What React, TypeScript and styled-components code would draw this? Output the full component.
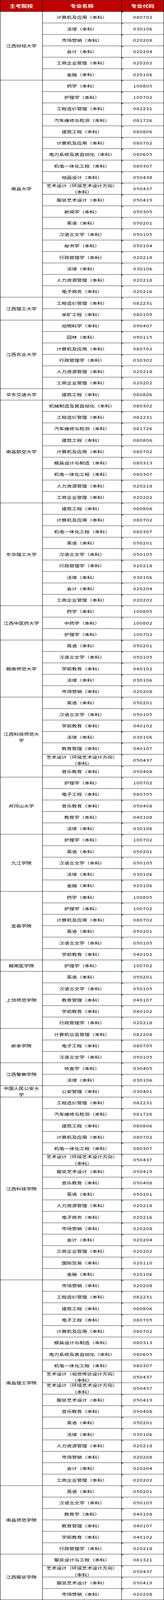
import React, { useState } from "react";
import styled, { createGlobalStyle } from "styled-components";

const GlobalStyle = createGlobalStyle`
  html, body {
    margin: 0;
    padding: 0;
    background: #ffffff;
  }
  body {
    font-family: "Noto Sans CJK SC", "Noto Sans", sans-serif;
    color: #000;
  }
  * { box-sizing: border-box; }
`;

type Item = [string, string, boolean?];
interface Group {
  school: string;
  items: Item[];
}

const data: Group[] = [
  { school: "江西财经大学", items: [["计算机及应用", "080702"], ["法律", "030106"], ["市场营销", "020208"], ["会计", "020204"], ["工商企业管理", "020202"], ["金融", "020106"]] },
  { school: "南昌大学", items: [["药学", "100805"], ["护理学", "100702"], ["工程造价管理", "082231"], ["汽车维修与检测", "081726"], ["建筑工程", "080806"], ["计算机及应用", "080702"], ["电力系统及其自动化", "080605"], ["机电一体化工程", "080307"], ["动画设计", "050438"], ["艺术设计（环境艺术设计方向）", "050437"], ["服装艺术设计", "050419"], ["新闻学", "050305"], ["英语", "050201"], ["汉语言文学", "050105"], ["秘书学", "050104"], ["行政管理学", "020218"], ["法律", "030106"], ["人力资源管理", "020218"], ["电子商务", "020216"]] },
  { school: "江西理工大学", items: [["工程造价管理", "082231"], ["采矿工程", "080109"]] },
  { school: "江西农业大学", items: [["动物科学", "090407"], ["园林", "090115"], ["计算机及应用", "080702"], ["行政管理学", "030302"], ["人力资源管理", "020218"], ["工商企业管理", "020202"]] },
  { school: "华东交通大学", items: [["建筑工程", "080806"]] },
  { school: "南昌航空大学", items: [["机械制造及其自动化", "080302"], ["工程造价管理", "082231"], ["汽车维修与检测", "081726"], ["建筑工程", "080806"], ["计算机及应用", "080702"], ["模具设计与制造", "080313"], ["机电一体化工程", "080307"], ["人力资源管理", "020218"], ["工商企业管理", "020202"]] },
  { school: "东华理工大学", items: [["建筑工程", "080806"], ["计算机及应用", "080702"], ["机电一体化工程", "080307"], ["英语", "050201"], ["汉语言文学", "050105"], ["行政管理学", "020218"], ["法律", "030106"], ["会计", "020204"], ["工商企业管理", "020202"]] },
  { school: "江西中医药大学", items: [["药学", "100805"], ["中药学", "100802"], ["护理学", "100702"]] },
  { school: "赣南师范大学", items: [["英语", "050201"], ["汉语言文学", "050105"], ["学前教育", "040102"], ["法律", "030106"], ["市场营销", "020208"]] },
  { school: "江西科技师范大学", items: [["英语", "050201"], ["汉语言文学", "050105"], ["学前教育", "040102"], ["法律", "030106"], ["教育管理", "040107"], ["艺术设计（环境艺术设计方向）", "050437"], ["音乐教育", "050408"]] },
  { school: "井冈山大学", items: [["护理学", "100702"], ["电子工程", "080705"], ["音乐教育", "050408"], ["教育学", "040108"], ["法律", "030106"]] },
  { school: "九江学院", items: [["护理学", "100702"], ["英语", "050201"], ["汉语言文学", "050105"], ["法律", "030106"], ["金融", "020106"]] },
  { school: "宜春学院", items: [["药学", "100805"], ["护理学", "100702"], ["计算机及应用", "080702"], ["英语", "050201"], ["汉语言文学", "050105"], ["学前教育", "040102"]] },
  { school: "赣南医学院", items: [["护理学", "100702"]] },
  { school: "上饶师范学院", items: [["英语", "050201"], ["汉语言文学", "050105"], ["教育管理", "040107"], ["学前教育", "040102"], ["行政管理学", "020218"]] },
  { school: "新余学院", items: [["计算机信息管理", "082208"], ["电子工程", "080705"], ["汉语言文学", "050105"]] },
  { school: "江西警察学院", items: [["侦查学", "030405"], ["法律", "030106"]] },
  { school: "中国人民公安大学", items: [["公安管理", "030401"]] },
  { school: "江西科技学院", items: [["工程造价管理", "082231"], ["汽车维修与检测", "081726"], ["建筑工程", "080806"], ["计算机及应用", "080702"], ["机电一体化工程", "080307"], ["艺术设计（环境艺术设计方向）", "050437"], ["服装艺术设计", "050419"], ["音乐教育", "050408"], ["英语", "050201"], ["人力资源管理", "020218"], ["电子商务", "020216"], ["市场营销", "020208"], ["会计", "020204"], ["工商企业管理", "020202"], ["国际贸易", "020110"], ["金融", "020106"]] },
  { school: "南昌理工学院", items: [["市场营销", "020208"], ["工程造价管理", "082231"], ["建筑工程", "080806"], ["电子工程", "080705"], ["计算机及应用", "080702"], ["模具设计与制造", "080313", false], ["电力系统及其自动化", "080605", false], ["机电一体化工程", "080307", false], ["艺术设计（视觉传达设计方向）", "050437", false], ["艺术设计（环境艺术设计方向）", "050437", false], ["服装艺术设计", "050419"], ["音乐教育", "050408"], ["英语", "050201"], ["法律", "030106"], ["人力资源管理", "020218"], ["市场营销", "020208"], ["会计", "020204"], ["工商企业管理", "020202"]] },
  { school: "南昌师范学院", items: [["英语", "050201"], ["汉语言文学", "050105"], ["教育学", "040108"], ["教育管理", "040107"], ["学前教育", "040102"], ["行政管理学", "020218"]] },
  { school: "江西服装学院", items: [["服装设计与工程", "081321"], ["艺术设计（环境艺术设计方向）", "050437"], ["服装艺术设计", "050419"], ["市场营销", "020208"]] },
];

const ROW = 40;
const totalRows = 1 + data.reduce((n, g) => n + g.items.length, 0);
const FULL_HEIGHT = totalRows * ROW + 1;

/* Clips the page to the visible window so nothing spills past it. */
const Frame = styled.div`
  width: 419px;
  overflow: hidden;
`;

/* Fits the full-height table into a shorter window when the browser caps its height. */
const Fitter = styled.div`
  width: 419px;
  transform-origin: 0 0;
`;

const Table = styled.div<{ $rows: number }>`
  display: grid;
  grid-template-columns: 108px 202px 108px;
  grid-template-rows: repeat(${(p) => p.$rows}, ${ROW}px);
  width: 419px;
  border-left: 1px solid #000;
  border-top: 1px solid #000;
`;

const Cell = styled.div<{ $row: number; $span?: number }>`
  grid-row: ${(p) => p.$row} / span ${(p) => p.$span ?? 1};
  display: flex;
  align-items: center;
  justify-content: center;
  text-align: center;
  border-right: 1px solid #000;
  border-bottom: 1px solid #000;
  padding: 0 4px;
  font-size: 13px;
  line-height: 22px;
  min-width: 0;
  min-height: 0;
`;

const HeaderCell = styled(Cell)<{ $col: number }>`
  grid-column: ${(p) => p.$col};
  background: #c00000;
  color: #ffffff;
  font-size: 15px;
  font-weight: 700;
`;

const SchoolCell = styled(Cell)`
  grid-column: 1;
`;

const MajorCell = styled(Cell)`
  grid-column: 2;
`;

const CodeCell = styled(Cell)<{ $flag: boolean }>`
  grid-column: 3;
  position: relative;
  letter-spacing: 1px;
  padding-left: 5px;

  &::before {
    content: "";
    display: ${(p) => (p.$flag ? "block" : "none")};
    position: absolute;
    top: 0;
    left: 0;
    width: 0;
    height: 0;
    border-top: 5px solid #1c8f1c;
    border-right: 5px solid transparent;
  }
`;

const Text = styled.span`
  display: block;
`;

export default function App() {
  const [scale] = useState(() =>
    typeof window === "undefined" ? 1 : Math.min(1, window.innerHeight / FULL_HEIGHT)
  );

  let row = 2;
  const cells: React.ReactNode[] = [];
  data.forEach((g, gi) => {
    const start = row;
    cells.push(
      <SchoolCell key={`s${gi}`} $row={start} $span={g.items.length}>
        <Text>{g.school}</Text>
      </SchoolCell>
    );
    g.items.forEach(([major, code, flag], i) => {
      const r = start + i;
      cells.push(
        <MajorCell key={`m${gi}-${i}`} $row={r}>
          <Text>{`${major}（本科）`}</Text>
        </MajorCell>,
        <CodeCell key={`c${gi}-${i}`} $row={r} $flag={flag !== false}>
          {code}
        </CodeCell>
      );
    });
    row += g.items.length;
  });

  return (
    <>
      <GlobalStyle />
      <Frame style={{ height: FULL_HEIGHT * scale }}>
        <Fitter style={{ transform: `scaleY(${scale})` }}>
          <Table role="table" $rows={totalRows}>
            <HeaderCell $row={1} $col={1}>主考院校</HeaderCell>
            <HeaderCell $row={1} $col={2}>专业名称</HeaderCell>
            <HeaderCell $row={1} $col={3}>专业代码</HeaderCell>
            {cells}
          </Table>
        </Fitter>
      </Frame>
    </>
  );
}
